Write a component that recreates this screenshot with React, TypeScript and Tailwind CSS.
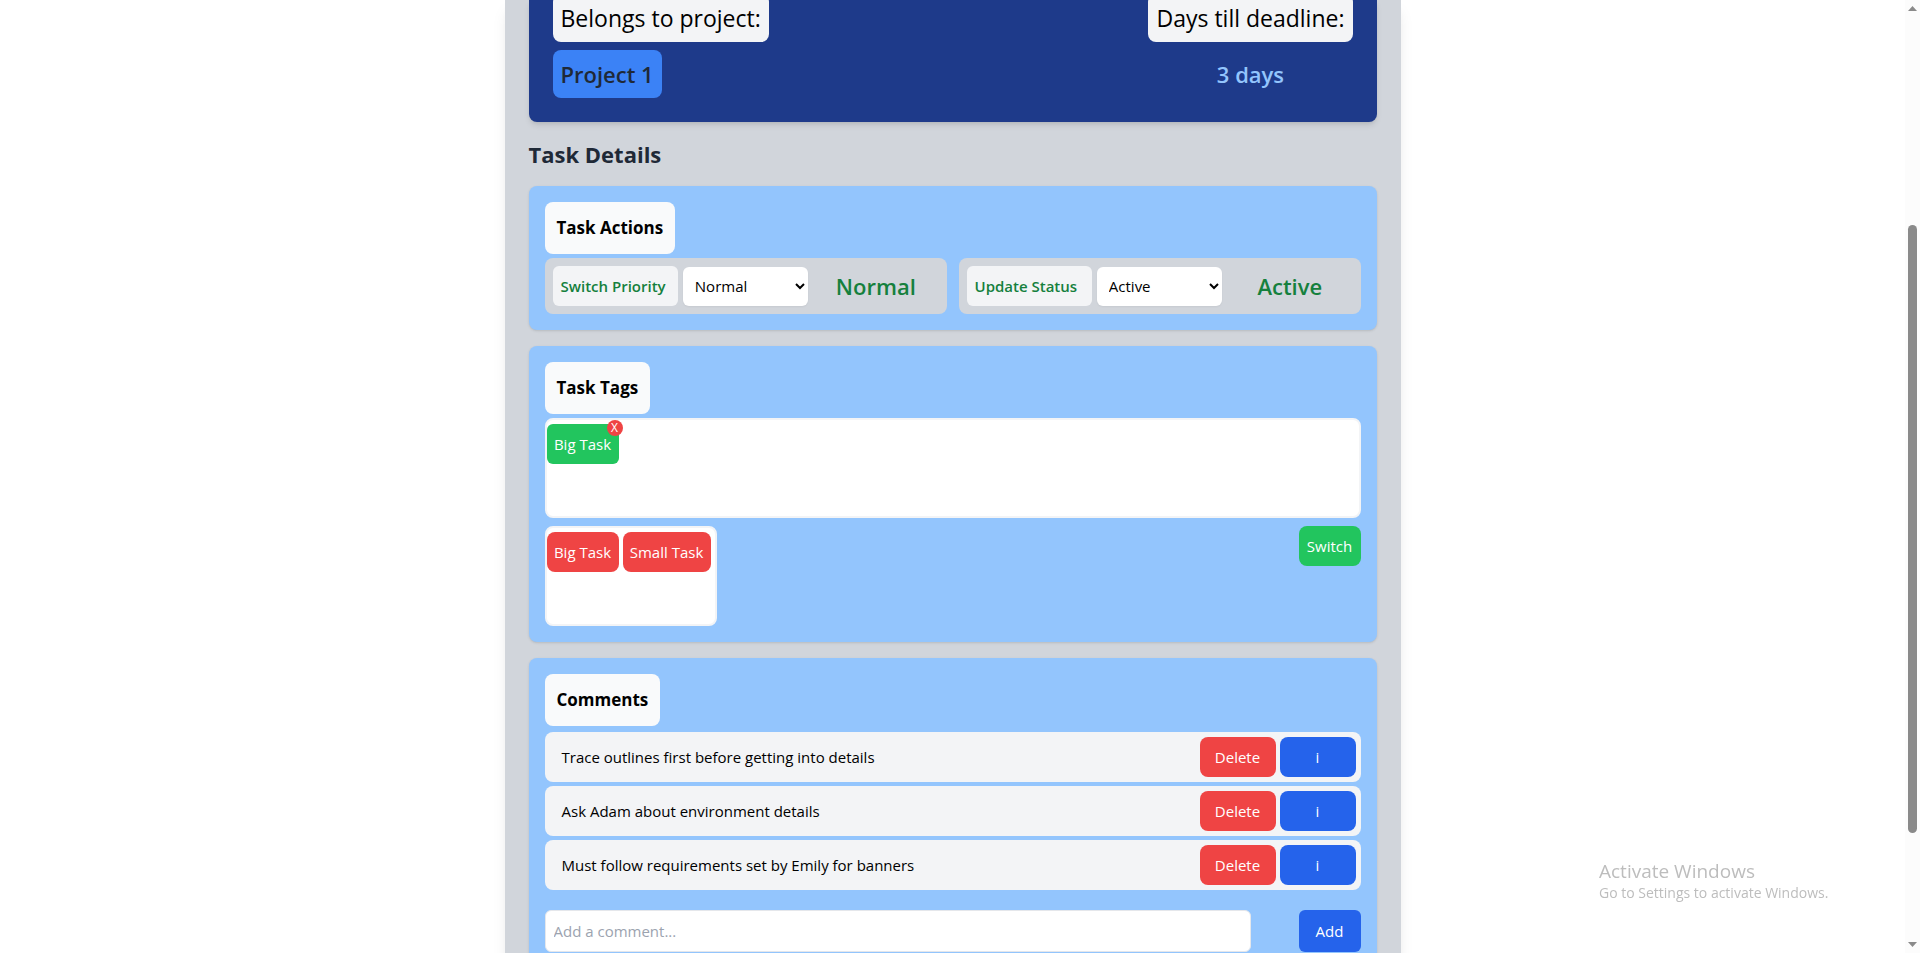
import { useState, type ReactNode } from "react";

const tagClass = "rounded-lg py-2 text-center text-[15px] leading-6 text-white whitespace-nowrap";

function Card({ title, children }: { title: string; children: ReactNode }) {
  return (
    <section className="mb-4 rounded-lg bg-[#93c5fd] p-4 shadow-sm">
      <h3 className="mb-1 w-fit rounded-lg bg-[#f9fafb] p-3 text-[17px] leading-7 font-bold text-black">
        {title}
      </h3>
      {children}
    </section>
  );
}

interface SwitcherProps {
  id: string;
  label: string;
  options: string[];
}

function Switcher({ id, label, options }: SwitcherProps) {
  const [value, setValue] = useState(options[0]);
  return (
    <div className="grid flex-1 grid-cols-3 items-center gap-[5px] rounded-lg bg-[#d1d5db] p-2">
      <label
        htmlFor={id}
        className="rounded-md bg-[#f3f4f6] p-2 text-[15px] leading-6 font-semibold whitespace-nowrap text-[#15803d]"
      >
        {label}
      </label>
      <select
        id={id}
        value={value}
        onChange={(e) => setValue(e.target.value)}
        className="h-[39px] w-full rounded-md bg-white px-2 text-[15px] text-black shadow-xs"
      >
        {options.map((o) => (
          <option key={o}>{o}</option>
        ))}
      </select>
      <span className="text-center text-[22px] leading-8 font-semibold text-[#15803d]">{value}</span>
    </div>
  );
}

const comments = [
  "Trace outlines first before getting into details",
  "Ask Adam about environment details",
  "Must follow requirements set by Emily for banners",
];

export default function App() {
  return (
    <div className="flex h-screen overflow-hidden bg-white font-['Open_Sans','Noto_Sans',sans-serif] text-black">
      <div className="min-w-0 flex-1">
        <main className="mx-auto max-w-4xl bg-[#d1d5db] px-6 shadow-lg">
          <header className="flex justify-between rounded-b-lg bg-[#1e3a8a] px-6 pb-6 text-[22px] leading-8 shadow-md">
            <div className="-mt-1.5 flex flex-col items-start gap-2">
              <p className="rounded-lg bg-[#f3f4f6] p-2 text-[23px]">Belongs to project:</p>
              <a href="#project" className="rounded-lg bg-[#3b82f6] p-2 font-semibold text-[#1f2937]">
                Project 1
              </a>
            </div>
            <div className="-mt-1.5 flex flex-col items-center gap-2">
              <p className="rounded-lg bg-[#f3f4f6] p-2 text-[23px]">Days till deadline:</p>
              <p className="p-2 font-semibold text-[#93c5fd]">3 days</p>
            </div>
          </header>

          <h2 className="py-4 text-[22px] leading-8 font-bold text-[#1f2937]">Task Details</h2>

          <Card title="Task Actions">
            <div className="flex gap-3">
              <Switcher id="priority" label="Switch Priority" options={["Normal", "High", "Low"]} />
              <Switcher id="status" label="Update Status" options={["Active", "Completed"]} />
            </div>
          </Card>

          <Card title="Task Tags">
            <div className="flex h-[100px] items-start gap-1 rounded-lg border-2 border-[#f3f4f6] bg-white pt-1">
              <div className="relative w-18 rounded-md bg-[#22c55e]">
                <p className={tagClass}>Big Task</p>
                <button
                  type="button"
                  aria-label="Remove Big Task"
                  className="absolute -top-1 -right-1 flex size-4 items-center justify-center rounded-full bg-[#ef4444] text-[12px] leading-4 text-white"
                >
                  X
                </button>
              </div>
            </div>
            <div className="mt-2 flex items-start justify-between">
              <div className="flex h-[100px] items-start gap-1 rounded-lg border-2 border-[#f3f4f6] bg-white pt-1 pr-1">
                <button type="button" className={`${tagClass} w-18 bg-[#ef4444]`}>Big Task</button>
                <button type="button" className={`${tagClass} w-22 bg-[#ef4444]`}>Small Task</button>
              </div>
              <button type="button" className={`${tagClass} w-[62px] bg-[#22c55e]`}>Switch</button>
            </div>
          </Card>

          <Card title="Comments">
            <ul className="mt-1.5 flex flex-col gap-1">
              {comments.map((text) => (
                <li key={text} className="flex items-center gap-1 rounded-lg bg-[#f3f4f6] p-[5px] text-[15px] leading-6">
                  <p className="flex-1 px-3">{text}</p>
                  <button type="button" className="w-19 rounded-lg bg-[#ef4444] py-2 text-white">Delete</button>
                  <button type="button" className="w-19 rounded-lg bg-[#2563eb] py-2 text-white">i</button>
                </li>
              ))}
            </ul>
            <form className="mt-5 flex gap-12 text-[15px] leading-6" onSubmit={(e) => e.preventDefault()}>
              <input
                type="text"
                aria-label="Add a comment"
                placeholder="Add a comment..."
                className="min-w-0 flex-1 rounded-md border border-[#e5e7eb] bg-white p-2 placeholder:text-[#9ca3af]"
              />
              <button type="submit" className="w-[62px] rounded-md bg-[#2563eb] text-white">Add</button>
            </form>
          </Card>
        </main>
      </div>

      <div aria-hidden="true" className="flex w-[15px] flex-col items-center bg-[#fcfcfc] py-1.5">
        <svg className="h-[5px] w-[9px]" viewBox="0 0 9 5"><path d="M0 5 4.5 0 9 5Z" fill="#8a8a8a" /></svg>
        <div className="flex w-full flex-1 flex-col items-center">
          <div className="flex-[214]" />
          <div className="w-[9px] flex-[608] rounded-full bg-[#8a8a8a]" />
          <div className="flex-[109]" />
        </div>
        <svg className="h-[5px] w-[9px]" viewBox="0 0 9 5"><path d="M0 0 4.5 5 9 0Z" fill="#8a8a8a" /></svg>
      </div>

      <aside className="pointer-events-none fixed right-20 bottom-[50px] w-[241px] whitespace-nowrap text-[#bdbdbd]">
        <p className="text-[19px] leading-6">Activate Windows</p>
        <p className="text-[14px] leading-5">Go to Settings to activate Windows.</p>
      </aside>
    </div>
  );
}
